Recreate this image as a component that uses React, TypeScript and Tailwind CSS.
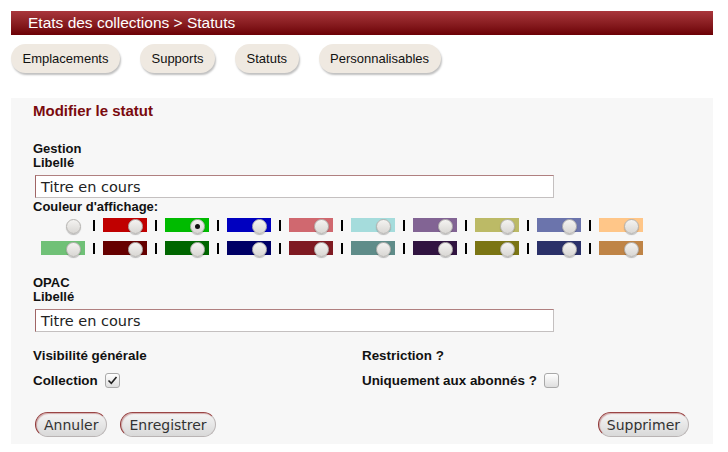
const row1: (string | null)[] = [null, "#c00000", "#00bb00", "#0000c0", "#d0686f", "#a5dcdc", "#826494", "#bcba66", "#6b74ac", "#ffc688"];
const row2: (string | null)[] = ["#70c177", "#660000", "#006600", "#000066", "#7f1a22", "#5f8c89", "#311441", "#7b7514", "#2b3169", "#bf8446"];

const tabs = ["Emplacements", "Supports", "Statuts", "Personnalisables"];

function Radio({ checked }: { checked?: boolean }) {
  return (
    <span className="absolute right-[4px] top-[1px] flex h-[15px] w-[15px] items-center justify-center rounded-full border border-[#b5b3b0] bg-linear-to-b from-[#f4f3f1] to-[#d9d7d4] shadow-[0_1px_1px_rgba(0,0,0,0.25)]">
      {checked && <span className="h-[5px] w-[5px] rounded-full bg-[#111]" />}
    </span>
  );
}

function SwatchRow({ colors, selected }: { colors: (string | null)[]; selected?: number }) {
  return (
    <div className="flex items-center pl-[8px]">
      {colors.map((c, i) => (
        <div key={i} className="flex items-center">
          {i > 0 && <span className="mx-[8px] h-[11px] w-[2px] bg-black" />}
          <div className="relative h-[14px] w-[44px]" style={{ backgroundColor: c ?? "transparent" }}>
            <Radio checked={i === selected} />
          </div>
        </div>
      ))}
    </div>
  );
}

function Checkbox({ checked }: { checked?: boolean }) {
  return (
    <span className="flex h-[15px] w-[15px] items-center justify-center rounded-[3px] border border-[#a9a9a9] bg-linear-to-b from-white to-[#dedede]">
      {checked && (
        <svg width="11" height="11" viewBox="0 0 11 11">
          <path d="M1.5 5.5 L4.3 8.3 L9.5 2" fill="none" stroke="#222" strokeWidth="1.6" />
        </svg>
      )}
    </span>
  );
}

function TextInput({ value }: { value: string }) {
  return (
    <div className="ml-[2px] flex h-[23px] w-[519px] items-center border border-[#c4c0c0] border-l-[#a06565] border-t-[#b08080] bg-white px-[5px] font-['DejaVu_Sans',sans-serif] text-[14.5px] font-normal text-[#222]">
      {value}
    </div>
  );
}

function Btn({ label }: { label: string }) {
  return (
    <button className="h-[25px] rounded-full border border-[#b9b4b4] border-l-[#8e3434] border-t-[#9a4545] bg-linear-to-b from-[#f5f5f5] to-[#d9d9d9] px-[8px] font-['DejaVu_Sans',sans-serif] text-[14px] font-normal leading-none text-[#333] shadow-[inset_1px_1px_1px_rgba(150,40,40,0.35)]">
      {label}
    </button>
  );
}

export default function App() {
  return (
    <div className="h-[452px] w-[728px] bg-white pl-[11px] pr-[15px] pt-[11px] font-['Liberation_Sans',Arial,sans-serif]">
      <div className="flex h-[24px] items-center bg-linear-to-b from-[#a9363c] to-[#6c0005] pl-[17px] text-[15.5px] text-white">
        Etats des collections &gt; Statuts
      </div>

      <div className="mt-[9px] flex gap-[20px]">
        {tabs.map((t) => (
          <div
            key={t}
            className="flex h-[29px] items-center rounded-full bg-[#efe9e1] px-[11.5px] text-[13px] text-[#111] shadow-[1px_2px_2px_rgba(0,0,0,0.25)]"
          >
            {t}
          </div>
        ))}
      </div>

      <div className="mt-[25px] h-[346px] bg-[#f7f7f7] pl-[22px] pr-[24px] pt-[4px] text-[13px] font-bold leading-[14px] text-[#111]">
        <div className="text-[15px] leading-[18px] text-[#7a0a0e]">Modifier le statut</div>

        <div className="mt-[22px]">Gestion</div>
        <div>Libellé</div>
        <div className="mt-[5px]">
          <TextInput value="Titre en cours" />
        </div>
        <div className="mt-[2px]">Couleur d'affichage:</div>
        <div className="mt-[4px]">
          <SwatchRow colors={row1} selected={2} />
        </div>
        <div className="mt-[9px]">
          <SwatchRow colors={row2} />
        </div>

        <div className="mt-[21px]">OPAC</div>
        <div>Libellé</div>
        <div className="mt-[5px]">
          <TextInput value="Titre en cours" />
        </div>

        <div className="mt-[17px] grid grid-cols-[329px_1fr] gap-y-[10px] text-[13.4px]">
          <div>Visibilité générale</div>
          <div>Restriction ?</div>
          <div className="flex items-center gap-[7px]">
            Collection <Checkbox checked />
          </div>
          <div className="flex items-center gap-[7px]">
            Uniquement aux abonnés ? <Checkbox />
          </div>
        </div>

        <div className="mt-[24px] flex items-center justify-between pl-[2px] font-normal">
          <div className="flex gap-[13px]">
            <Btn label="Annuler" />
            <Btn label="Enregistrer" />
          </div>
          <Btn label="Supprimer" />
        </div>
      </div>
    </div>
  );
}
